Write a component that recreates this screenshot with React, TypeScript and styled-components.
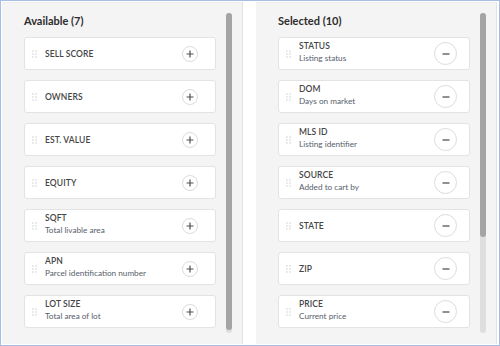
import * as React from "react"
import styled, {createGlobalStyle} from "styled-components"

type Field = {
    title: string
    description?: string
}

const available: Field[] = [
    {title: "SELL SCORE"},
    {title: "OWNERS"},
    {title: "EST. VALUE"},
    {title: "EQUITY"},
    {title: "SQFT", description: "Total livable area"},
    {title: "APN", description: "Parcel identification number"},
    {title: "LOT SIZE", description: "Total area of lot"},
]

const selected: Field[] = [
    {title: "STATUS", description: "Listing status"},
    {title: "DOM", description: "Days on market"},
    {title: "MLS ID", description: "Listing identifier"},
    {title: "SOURCE", description: "Added to cart by"},
    {title: "STATE"},
    {title: "ZIP"},
    {title: "PRICE", description: "Current price"},
]

const GlobalStyle = createGlobalStyle`
  html, body {
    margin: 0;
    padding: 0;
    background: #fff;
  }
  body {
    font-family: Lato, "Open Sans", sans-serif;
  }
`

const DragHandle = () => (
    <HandleIcon width="5" height="8" viewBox="0 0 5 8">
        {[1, 4, 7].map((y) => (
            <React.Fragment key={y}>
                <circle cx="0.9" cy={y} r="0.8" />
                <circle cx="4.1" cy={y} r="0.8" />
            </React.Fragment>
        ))}
    </HandleIcon>
)

const FieldCard = ({field, mode}: {field: Field, mode: "add" | "remove"}) => (
    <Card>
        <DragHandle />
        <TextBlock $twoLine={!!field.description}>
            <Title>{field.title}</Title>
            {field.description && <Description>{field.description}</Description>}
        </TextBlock>
        <RoundButton $mode={mode}>
            {mode === "add" ? (
                <svg width="8" height="8" viewBox="0 0 8 8">
                    <path d="M4 0.5v7M0.5 4h7" stroke="#505050" strokeWidth="1.2" />
                </svg>
            ) : (
                <svg width="8" height="4" viewBox="0 0 8 4">
                    <path d="M0.5 2h7" stroke="#606060" strokeWidth="1.4" />
                </svg>
            )}
        </RoundButton>
    </Card>
)

const FieldPanel = ({heading, fields, mode, thumb}: {heading: string, fields: Field[], mode: "add" | "remove", thumb: number}) => (
    <Panel>
        <Column>
            <Heading>{heading}</Heading>
            <CardList>
                {fields.map((f) => (
                    <FieldCard key={f.title} field={f} mode={mode} />
                ))}
            </CardList>
        </Column>
        <ScrollTrack>
            <ScrollThumb style={{height: `${thumb}%`}} />
        </ScrollTrack>
    </Panel>
)

export default function App() {
    return (
        <>
            <GlobalStyle />
            <Frame>
                <FieldPanel heading="Available (7)" fields={available} mode="add" thumb={99} />
                <FieldPanel heading="Selected (10)" fields={selected} mode="remove" thumb={70} />
            </Frame>
        </>
    )
}

const Frame = styled("div")`
  width: 500px;
  height: 346px;
  box-sizing: border-box;
  border: 1px solid #a6bde6;
  padding: 1px;
  display: flex;
  gap: 13px;
  background: #fff;
  overflow: hidden;
`

const Panel = styled("section")`
  width: 241px;
  box-sizing: border-box;
  background: #f4f4f4;
  border-right: 1px solid #e2e2e2;
  border-top: 1px solid #ececec;
  display: flex;
  overflow: hidden;
`

const Column = styled("div")`
  flex: 1;
  padding-left: 22px;
  display: flex;
  flex-direction: column;
  min-width: 0;
`

const Heading = styled("h2")`
  margin: 0;
  padding-top: 11px;
  font-size: 11px;
  line-height: 14px;
  font-weight: 700;
  color: #2c2c2c;
  margin-bottom: 9px;
`

const CardList = styled("div")`
  display: flex;
  flex-direction: column;
  gap: 10px;
`

const Card = styled("div")`
  height: 33px;
  flex-shrink: 0;
  box-sizing: border-box;
  background: #fff;
  border: 1px solid #e3e3e3;
  border-radius: 3px;
  display: flex;
  align-items: center;
  padding: 0 11px 0 7px;
`

const HandleIcon = styled("svg")`
  fill: #cfcfcf;
  flex-shrink: 0;
  margin-right: 8px;
`

const TextBlock = styled("div")<{$twoLine: boolean}>`
  flex: 1;
  display: flex;
  flex-direction: column;
  padding-bottom: ${(p) => (p.$twoLine ? "3px" : "0")};
`

const Title = styled("div")`
  font-size: 8.5px;
  line-height: 10px;
  font-weight: 600;
  color: #454545;
  letter-spacing: 0.1px;
`

const Description = styled("div")`
  font-size: 8.2px;
  line-height: 10px;
  margin-top: 2px;
  color: #56606b;
`

const RoundButton = styled("div")<{$mode: "add" | "remove"}>`
  flex-shrink: 0;
  box-sizing: border-box;
  width: ${(p) => (p.$mode === "add" ? "16px" : "23px")};
  height: ${(p) => (p.$mode === "add" ? "16px" : "23px")};
  margin-right: ${(p) => (p.$mode === "add" ? "6px" : "1px")};
  border-radius: 50%;
  border: 1px solid #dcdcdc;
  background: #fff;
  display: flex;
  align-items: center;
  justify-content: center;
`

const ScrollTrack = styled("div")`
  width: 6px;
  margin: 10px 10px 11px 10px;
  border-radius: 3px;
  background: #dedede;
  flex-shrink: 0;
`

const ScrollThumb = styled("div")`
  width: 100%;
  border-radius: 3px;
  background: #a4a4a4;
`
